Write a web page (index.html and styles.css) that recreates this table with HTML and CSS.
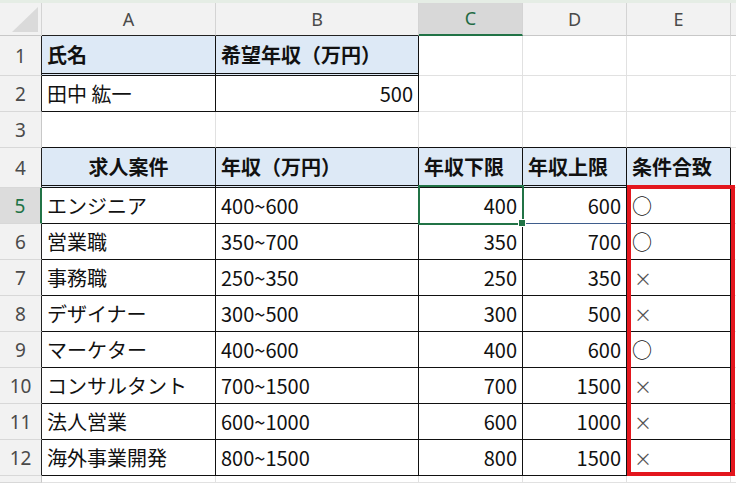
FILE: index.html
```html
<!DOCTYPE html>
<html lang="ja">
<head>
<meta charset="utf-8">
<title>求人案件</title>
<link rel="stylesheet" href="styles.css">
</head>
<body>
<div class="sheet">
  <div class="strip"></div>
  <div class="stack">
  <div class="grid">
    <!-- column headers -->
    <div class="corner"><span class="tri"></span></div>
    <div class="ch tb">A</div>
    <div class="ch tb">B</div>
    <div class="ch sel">C</div>
    <div class="ch">D</div>
    <div class="ch">E</div>
    <div class="ch"></div>

    <!-- row 1 -->
    <div class="rh t">1</div>
    <div class="c hd dbl r">氏名</div>
    <div class="c hd dbl r">希望年収（万円）</div>
    <div class="c"></div>
    <div class="c"></div>
    <div class="c"></div>
    <div class="c"></div>

    <!-- row 2 -->
    <div class="rh t">2</div>
    <div class="c r b">田中 紘一</div>
    <div class="c r b num">500</div>
    <div class="c"></div>
    <div class="c"></div>
    <div class="c"></div>
    <div class="c"></div>

    <!-- row 3 -->
    <div class="rh">3</div>
    <div class="c b"></div>
    <div class="c b"></div>
    <div class="c b"></div>
    <div class="c b"></div>
    <div class="c b"></div>
    <div class="c"></div>

    <!-- row 4 -->
    <div class="rh t">4</div>
    <div class="c hd dbl r ctr">求人案件</div>
    <div class="c hd dbl r">年収（万円）</div>
    <div class="c hd dbl r">年収下限</div>
    <div class="c hd dbl r">年収上限</div>
    <div class="c hd dbl r">条件合致</div>
    <div class="c"></div>

    <!-- row 5 -->
    <div class="rh act">5</div>
    <div class="c r b">エンジニア</div>
    <div class="c r b">400~600</div>
    <div class="c r b num">400</div>
    <div class="c r b num blu">600</div>
    <div class="c r b">○</div>
    <div class="c"></div>

    <!-- row 6 -->
    <div class="rh t">6</div>
    <div class="c r b">営業職</div>
    <div class="c r b">350~700</div>
    <div class="c r b num">350</div>
    <div class="c r b num">700</div>
    <div class="c r b">○</div>
    <div class="c"></div>

    <!-- row 7 -->
    <div class="rh t">7</div>
    <div class="c r b">事務職</div>
    <div class="c r b">250~350</div>
    <div class="c r b num">250</div>
    <div class="c r b num">350</div>
    <div class="c r b x">×</div>
    <div class="c"></div>

    <!-- row 8 -->
    <div class="rh t">8</div>
    <div class="c r b">デザイナー</div>
    <div class="c r b">300~500</div>
    <div class="c r b num">300</div>
    <div class="c r b num">500</div>
    <div class="c r b x">×</div>
    <div class="c"></div>

    <!-- row 9 -->
    <div class="rh t">9</div>
    <div class="c r b">マーケター</div>
    <div class="c r b">400~600</div>
    <div class="c r b num">400</div>
    <div class="c r b num">600</div>
    <div class="c r b">○</div>
    <div class="c"></div>

    <!-- row 10 -->
    <div class="rh t">10</div>
    <div class="c r b">コンサルタント</div>
    <div class="c r b">700~1500</div>
    <div class="c r b num">700</div>
    <div class="c r b num">1500</div>
    <div class="c r b x">×</div>
    <div class="c"></div>

    <!-- row 11 -->
    <div class="rh t">11</div>
    <div class="c r b">法人営業</div>
    <div class="c r b">600~1000</div>
    <div class="c r b num">600</div>
    <div class="c r b num">1000</div>
    <div class="c r b x">×</div>
    <div class="c"></div>

    <!-- row 12 -->
    <div class="rh t">12</div>
    <div class="c r b">海外事業開発</div>
    <div class="c r b">800~1500</div>
    <div class="c r b num">800</div>
    <div class="c r b num">1500</div>
    <div class="c r b x">×</div>
    <div class="c"></div>

    <!-- row 13 (partial) -->
    <div class="rh"></div>
    <div class="c"></div>
    <div class="c"></div>
    <div class="c"></div>
    <div class="c"></div>
    <div class="c"></div>
    <div class="c"></div>
  </div>
  <div class="grid overlay">
    <div class="active"></div>
    <div class="mark"></div>
  </div>
  </div>
</div>
</body>
</html>
```

FILE: styles.css
```css
* { box-sizing: border-box; }
html, body {
  margin: 0;
  padding: 0;
  background: #ffffff;
}
body {
  font-family: "Noto Sans CJK JP", "Noto Sans", sans-serif;
  color: #111;
  width: 736px;
  height: 483px;
  overflow: hidden;
}
.sheet {
  display: flex;
  flex-direction: column;
  height: 483px;
}
.strip {
  height: 3px;
  background: #e5ede5;
  flex: none;
}
.stack {
  flex: 1;
  display: grid;
  grid-template-columns: 1fr;
  grid-template-rows: 1fr;
  min-height: 0;
}
.stack > .grid {
  grid-area: 1 / 1;
}
.grid {
  display: grid;
  grid-template-columns: 42px 174px 203px 104px 104px 104px 1fr;
  grid-template-rows: 33px 40px 36px 36px 40px repeat(8, 36px) 1fr;
  min-height: 0;
}
.overlay { pointer-events: none; }
.corner {
  background: #f2f2f2;
  border-right: 1px solid #d4d4d4;
  border-bottom: 1px solid #c8c8c8;
  display: flex;
  align-items: flex-end;
  justify-content: flex-end;
  padding: 0 3px 3px 0;
}
.tri {
  width: 0;
  height: 0;
  border-left: 26px solid transparent;
  border-bottom: 25px solid #dadada;
}
.ch {
  background: #f2f2f2;
  border-right: 1px solid #d4d4d4;
  border-bottom: 1px solid #c8c8c8;
  display: flex;
  align-items: center;
  justify-content: center;
  font-family: "Noto Sans", sans-serif;
  font-size: 18px;
  color: #4a4a4a;
  padding-bottom: 1px;
}
.ch.tb { border-bottom-color: #222; }
.ch.sel {
  background: #d8d8d8;
  border-bottom: 2px solid #217346;
  color: #1f6b43;
}
.rh {
  background: #f2f2f2;
  border-right: 1px solid #c8c8c8;
  border-bottom: 1px solid #d8d8d8;
  display: flex;
  align-items: center;
  justify-content: center;
  font-family: "Noto Sans", sans-serif;
  font-size: 19px;
  color: #4a4a4a;
}
.rh.t { border-right-color: #222; }
.rh.act {
  background: #dcdcdc;
  border-right: 2px solid #217346;
  color: #217346;
}
.c {
  border-right: 1px solid #e1e1e1;
  border-bottom: 1px solid #e1e1e1;
  display: flex;
  align-items: center;
  padding: 0 5px 1px 5px;
  font-size: 20px;
  white-space: nowrap;
  overflow: hidden;
}
.c.r { border-right-color: #111; }
.c.b { border-bottom-color: #111; }
.c.hd {
  background: #dde9f6;
  font-weight: 700;
}
.c.dbl { border-bottom: 3px double #111; }
.c.ctr { justify-content: center; }
.c.num { justify-content: flex-end; }
.c.blu { border-bottom-color: #3f5d8c; }
.c.x { color: #555; padding-left: 7px; padding-top: 1px; font-size: 18px; }

.active {
  grid-column: 4 / 5;
  grid-row: 6 / 7;
  margin: -3px -1px -1px -1px;
  border: 2px solid #217346;
  position: relative;
}
.active::after {
  content: "";
  position: absolute;
  right: -4px;
  bottom: -4px;
  width: 6px;
  height: 6px;
  background: #217346;
  border: 1px solid #ffffff;
}
.mark {
  grid-column: 6 / 7;
  grid-row: 6 / 14;
  margin: -3px -4px 0 0;
  border: 4px solid #e3161d;
}
```
